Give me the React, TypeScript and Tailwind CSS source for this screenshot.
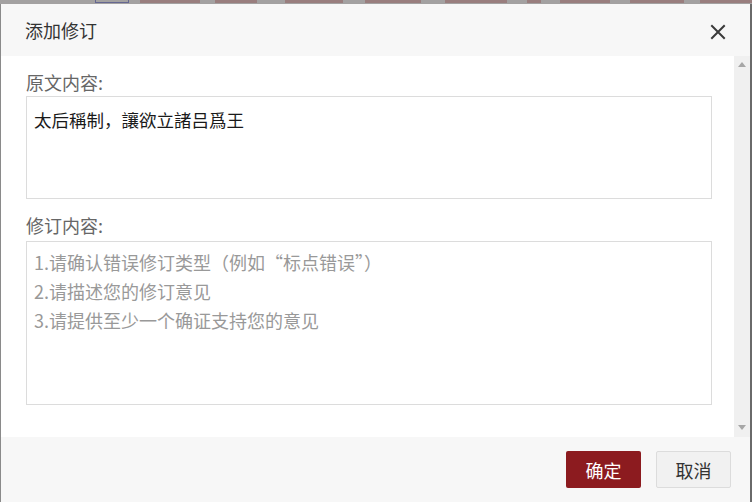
import React from "react";

export default function App() {
  const font = { fontFamily: '"Microsoft YaHei", "Noto Sans CJK SC", "Noto Sans", sans-serif' };
  const frags = [
    [140, 60], [215, 42], [285, 58], [365, 56], [445, 62], [527, 14], [560, 50], [630, 54], [700, 52],
  ];
  return (
    <div className="w-[752px] h-[502px] flex flex-col bg-[#9c9a9a] overflow-hidden" style={font}>
      <div className="h-[4px] relative overflow-hidden bg-[#a3a1a1] shrink-0">
        {frags.map(([l, w], i) => (
          <div
            key={i}
            className="absolute top-0 h-[3px] bg-[#8a4a4a] opacity-40"
            style={{ left: l, width: w }}
          />
        ))}
        <div className="absolute left-[95px] top-[-6px] w-[34px] h-[9px] border border-[#4a4f8a] opacity-70"></div>
      </div>
      <div className="flex-1 flex flex-col border-l border-l-[#8a8a8a] border-r-2 border-r-[#6a6a6a] bg-white">
        <div className="h-[52px] shrink-0 bg-[#f7f7f7] flex items-center justify-between pl-[24px] pr-[24px]">
          <span className="text-[18px] text-[#333] leading-none">添加修订</span>
          <svg width="16" height="16" viewBox="0 0 16 16" className="mt-[3px]">
            <path d="M2 2 L14 14 M14 2 L2 14" stroke="#3a3a3a" strokeWidth="2" strokeLinecap="square" />
          </svg>
        </div>
        <div className="h-[381px] shrink-0 flex">
          <div className="flex-1 pl-[25px] pr-[22px] pt-[14px]">
            <div className="text-[18px] leading-[24px] text-[#666]">原文内容:</div>
            <div className="mt-[2px] h-[103px] border border-[#dcdcdc] pl-[7px] pt-[11px] text-[17.5px] leading-[24px] text-[#1a1a1a]">
              太后稱制，讓欲立諸吕爲王
            </div>
            <div className="mt-[14px] text-[18px] leading-[24px] text-[#666]">修订内容:</div>
            <div className="mt-[4px] h-[164px] border border-[#dcdcdc] pl-[7px] pt-[6px] text-[18px] leading-[29px] text-[#999]">
              <div>1.请确认错误修订类型（例如“标点错误”）</div>
              <div>2.请描述您的修订意见</div>
              <div>3.请提供至少一个确证支持您的意见</div>
            </div>
          </div>
          <div className="w-[16px] shrink-0 bg-[#f0f0f0] flex flex-col items-center justify-between py-[6px]">
            <svg width="8" height="5" viewBox="0 0 8 5"><path d="M0 5 L4 0 L8 5 Z" fill="#a6a6a6" /></svg>
            <svg width="8" height="5" viewBox="0 0 8 5" className="mb-[1px]"><path d="M0 0 L8 0 L4 5 Z" fill="#a6a6a6" /></svg>
          </div>
        </div>
        <div className="flex-1 bg-[#f7f7f7] flex justify-end items-start pt-[14px] pr-[19px] gap-[15px]">
          <button className="w-[75px] h-[37px] rounded-[2px] bg-[#8c1b1f] text-white text-[18px] leading-none">确定</button>
          <button className="w-[75px] h-[37px] rounded-[2px] bg-[#f1f1f1] border border-[#dcdcdc] text-[#333] text-[18px] leading-none">取消</button>
        </div>
      </div>
    </div>
  );
}
